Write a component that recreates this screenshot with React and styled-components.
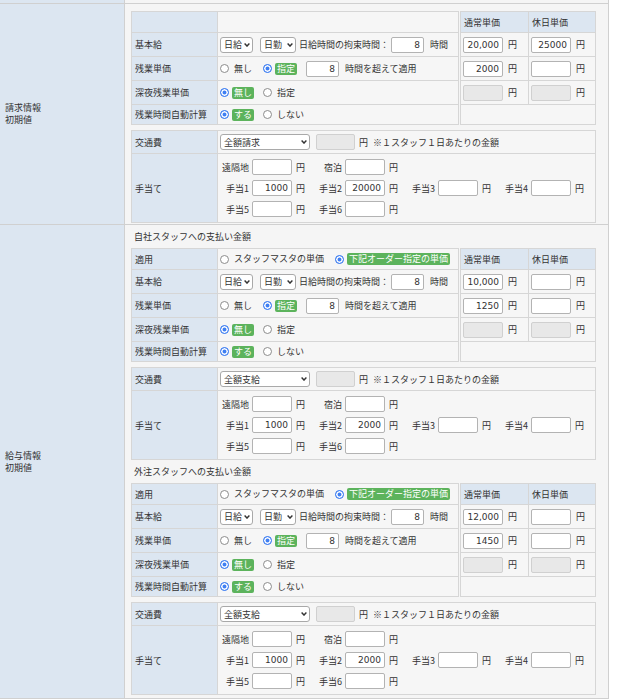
import React from 'react';
import styled, { createGlobalStyle } from 'styled-components';

const BLUE = '#dce6f1';
const LINE = '#d6d6d6';
const OUTER = '#d0d0d0';
const CELL = '#f6f6f6';

const GlobalStyle = createGlobalStyle`
  html, body { margin: 0; padding: 0; background: #ffffff; }
  body {
    font-family: "Noto Sans CJK JP", "Noto Sans", sans-serif;
    font-size: 9px;
    color: #333333;
  }
`;

const blocks = {
  billing: {
    apply: false,
    base: '20,000',
    holidayBase: '25000',
    over: '2000',
    holidayOver: '',
    transport: ['全額請求', '実費請求', '定額請求'],
    a1: '1000',
    a2: '20000',
  },
  own: {
    title: '自社スタッフへの支払い金額',
    apply: true,
    base: '10,000',
    holidayBase: '',
    over: '1250',
    holidayOver: '',
    transport: ['全額支給', '実費支給', '定額支給'],
    a1: '1000',
    a2: '2000',
  },
  outside: {
    title: '外注スタッフへの支払い金額',
    apply: true,
    base: '12,000',
    holidayBase: '',
    over: '1450',
    holidayOver: '',
    transport: ['全額支給', '実費支給', '定額支給'],
    a1: '1000',
    a2: '2000',
  },
};

export default function App() {
  return (
    <>
      <GlobalStyle />
      <Frame>
        <Row $h={3}>
          <Side />
          <Body $pad="0" />
        </Row>
        <Row>
          <Side>
            <span>請求情報</span>
            <span>初期値</span>
          </Side>
          <Body $pad="7px 12px 1px 6px">
            <RateBlock data={blocks.billing} />
          </Body>
        </Row>
        <Row>
          <Side>
            <span>給与情報</span>
            <span>初期値</span>
          </Side>
          <Body $pad="0 12px 3px 6px">
            <RateBlock data={blocks.own} />
            <RateBlock data={blocks.outside} />
          </Body>
        </Row>
      </Frame>
    </>
  );
}

function RateBlock({ data }) {
  return (
    <div>
      {data.title && <BlockTitle>{data.title}</BlockTitle>}
      <RatesRow>
        <MainGrid>
          {data.apply ? (
            <>
              <Cell $head>適用</Cell>
              <Cell $pl={2}>
                <RadioChoice text="スタッフマスタの単価" />
                <RadioChoice on text="下記オーダー指定の単価" />
              </Cell>
            </>
          ) : (
            <>
              <Cell $head />
              <Cell />
            </>
          )}
          <Cell $head>基本給</Cell>
          <Cell $pl={2}>
            <Select w={33} options={['日給', '時給']} />
            <Select w={36} ml={7} options={['日勤', '夜勤']} />
            <Text $ml={3}>日給時間の拘束時間：</Text>
            <NumInput $w={33} $ml={2} value="8" readOnly />
            <Text $ml={6}>時間</Text>
          </Cell>
          <Cell $head>残業単価</Cell>
          <Cell $pl={2}>
            <RadioChoice text="無し" />
            <RadioChoice on text="指定" />
            <NumInput $w={33} value="8" readOnly />
            <Text $ml={6}>時間を超えて適用</Text>
          </Cell>
          <Cell $head>深夜残業単価</Cell>
          <Cell $pl={2}>
            <RadioChoice on text="無し" />
            <RadioChoice text="指定" />
          </Cell>
          <Cell $head>残業時間自動計算</Cell>
          <Cell $pl={2}>
            <RadioChoice on text="する" />
            <RadioChoice text="しない" />
          </Cell>
        </MainGrid>

        <PriceGrid>
          <Cell $head>通常単価</Cell>
          <Cell $head>休日単価</Cell>
          <PriceCell value={data.base} />
          <PriceCell value={data.holidayBase} />
          <PriceCell value={data.over} />
          <PriceCell value={data.holidayOver} />
          <PriceCell disabled />
          <PriceCell disabled />
          <Cell $span={2} />
        </PriceGrid>
      </RatesRow>

      <TransportGrid>
        <Cell $head>交通費</Cell>
        <Cell $pl={2}>
          <Select w={90} options={data.transport} />
          <NumInput $w={39} $ml={6} disabled value="" readOnly />
          <Text $ml={4}>円</Text>
          <Text $ml={5}>※１スタッフ１日あたりの金額</Text>
        </Cell>
        <Cell $head>手当て</Cell>
        <AllowCell>
          <AllowLine>
            <Allowance label="遠隔地" />
            <Allowance label="宿泊" />
          </AllowLine>
          <AllowLine>
            <Allowance label="手当1" value={data.a1} />
            <Allowance label="手当2" value={data.a2} />
            <Allowance label="手当3" />
            <Allowance label="手当4" />
          </AllowLine>
          <AllowLine>
            <Allowance label="手当5" />
            <Allowance label="手当6" />
          </AllowLine>
        </AllowCell>
      </TransportGrid>
    </div>
  );
}

function Select({ w, ml, options }) {
  return (
    <SelectWrap $w={w} $ml={ml}>
      <SelectBox defaultValue={options[0]}>
        {options.map((o) => (
          <option key={o}>{o}</option>
        ))}
      </SelectBox>
      <Chevron width="6" height="4" viewBox="0 0 6 4">
        <path d="M0.6 0.6 L3 3.1 L5.4 0.6" stroke="#333" strokeWidth="1.4" fill="none" />
      </Chevron>
    </SelectWrap>
  );
}

function RadioChoice({ on, text }) {
  return (
    <RadioItem>
      <Radio checked={!!on} />
      <Choice $on={on}>{text}</Choice>
    </RadioItem>
  );
}

function PriceCell({ value = '', disabled }) {
  return (
    <Cell $pl={2}>
      <NumInput $w={40} value={value} disabled={disabled} readOnly />
      <Text $ml={5}>円</Text>
    </Cell>
  );
}

function Allowance({ label, value = '' }) {
  return (
    <AllowItem>
      <AllowLabel>{label}</AllowLabel>
      <NumInput $w={40} value={value} readOnly />
      <Text $ml={4}>円</Text>
    </AllowItem>
  );
}

const Frame = styled.div`
  width: 609px;
  box-sizing: border-box;
  border-right: 1px solid ${OUTER};
`;

const Row = styled.div`
  display: grid;
  grid-template-columns: 125px 1fr;
  border-bottom: 1px solid ${OUTER};
  min-height: ${(p) => p.$h || 0}px;
`;

const Side = styled.div`
  box-sizing: border-box;
  background: ${BLUE};
  border-right: 1px solid ${OUTER};
  padding-left: 5px;
  display: flex;
  flex-direction: column;
  justify-content: center;
  line-height: 12px;
`;

const Body = styled.div`
  background: #f5f5f5;
  padding: ${(p) => p.$pad};
`;

const BlockTitle = styled.div`
  height: 23px;
  display: flex;
  align-items: center;
  padding-left: 3px;
`;

const RatesRow = styled.div`
  display: flex;
  gap: 1px;
`;

const MainGrid = styled.div`
  width: 328px;
  box-sizing: border-box;
  display: grid;
  grid-template-columns: 85px 1fr;
  grid-template-rows: 20px 23px 23px 23px 19px;
  gap: 1px;
  padding: 1px;
  background: ${LINE};
`;

const PriceGrid = styled(MainGrid)`
  width: 136px;
  grid-template-columns: 67px 1fr;
`;

const TransportGrid = styled(MainGrid)`
  width: 465px;
  grid-template-rows: 22px 68px;
  margin-top: 5px;
`;

const Cell = styled.div`
  background: ${(p) => (p.$head ? BLUE : CELL)};
  display: flex;
  align-items: center;
  padding-left: ${(p) => p.$pl ?? 3}px;
  grid-column: ${(p) => (p.$span ? `span ${p.$span}` : 'auto')};
  white-space: nowrap;
  min-width: 0;
`;

const AllowCell = styled(Cell)`
  flex-direction: column;
  align-items: flex-start;
  justify-content: center;
  gap: 5px;
  padding-left: 1px;
`;

const AllowLine = styled.div`
  display: flex;
`;

const AllowItem = styled.div`
  width: 93px;
  flex: none;
  display: flex;
  align-items: center;
`;

const AllowLabel = styled.span`
  width: 30px;
  margin-right: 3px;
  text-align: right;
`;

const Text = styled.span`
  margin-left: ${(p) => p.$ml || 0}px;
  flex: none;
`;

const SelectWrap = styled.span`
  position: relative;
  display: inline-flex;
  flex: none;
  width: ${(p) => p.$w}px;
  margin-left: ${(p) => p.$ml || 0}px;
`;

const SelectBox = styled.select`
  appearance: none;
  width: 100%;
  height: 16px;
  box-sizing: border-box;
  margin: 0;
  padding: 0 10px 0 3px;
  border: 1px solid #a9a9a9;
  border-radius: 3px;
  background: #ffffff;
  font: inherit;
  color: #333333;
  outline: none;
`;

const Chevron = styled.svg`
  position: absolute;
  right: 3px;
  top: 6px;
  pointer-events: none;
`;

const NumInput = styled.input`
  width: ${(p) => p.$w}px;
  height: 16px;
  box-sizing: border-box;
  flex: none;
  margin: 0 0 0 ${(p) => p.$ml || 0}px;
  padding: 0 3px;
  border: 1px solid ${(p) => (p.disabled ? '#d0d0d0' : '#b3b3b3')};
  border-radius: 2px;
  background: ${(p) => (p.disabled ? '#e8e8e8' : '#ffffff')};
  font-family: "DejaVu Sans", sans-serif;
  font-size: 9px;
  color: #333333;
  text-align: right;
  outline: none;
`;

const RadioItem = styled.label`
  display: inline-flex;
  align-items: center;
  flex: none;
  margin-right: 9px;
`;

const Radio = styled.input.attrs({ type: 'radio', readOnly: true })`
  appearance: none;
  width: 9px;
  height: 9px;
  box-sizing: border-box;
  margin: 0 3px 0 0;
  border-radius: 50%;
  border: 1px solid #8c8c8c;
  background: #ffffff;

  &:checked {
    border-color: #3f7ff2;
    background: #3f7ff2;
    box-shadow: inset 0 0 0 1.5px #ffffff;
  }
`;

const Choice = styled.span`
  padding: 0 2px;
  line-height: 12px;
  border-radius: 2px;
  background: ${(p) => (p.$on ? '#5cb35c' : 'transparent')};
  color: ${(p) => (p.$on ? '#ffffff' : '#333333')};
`;
